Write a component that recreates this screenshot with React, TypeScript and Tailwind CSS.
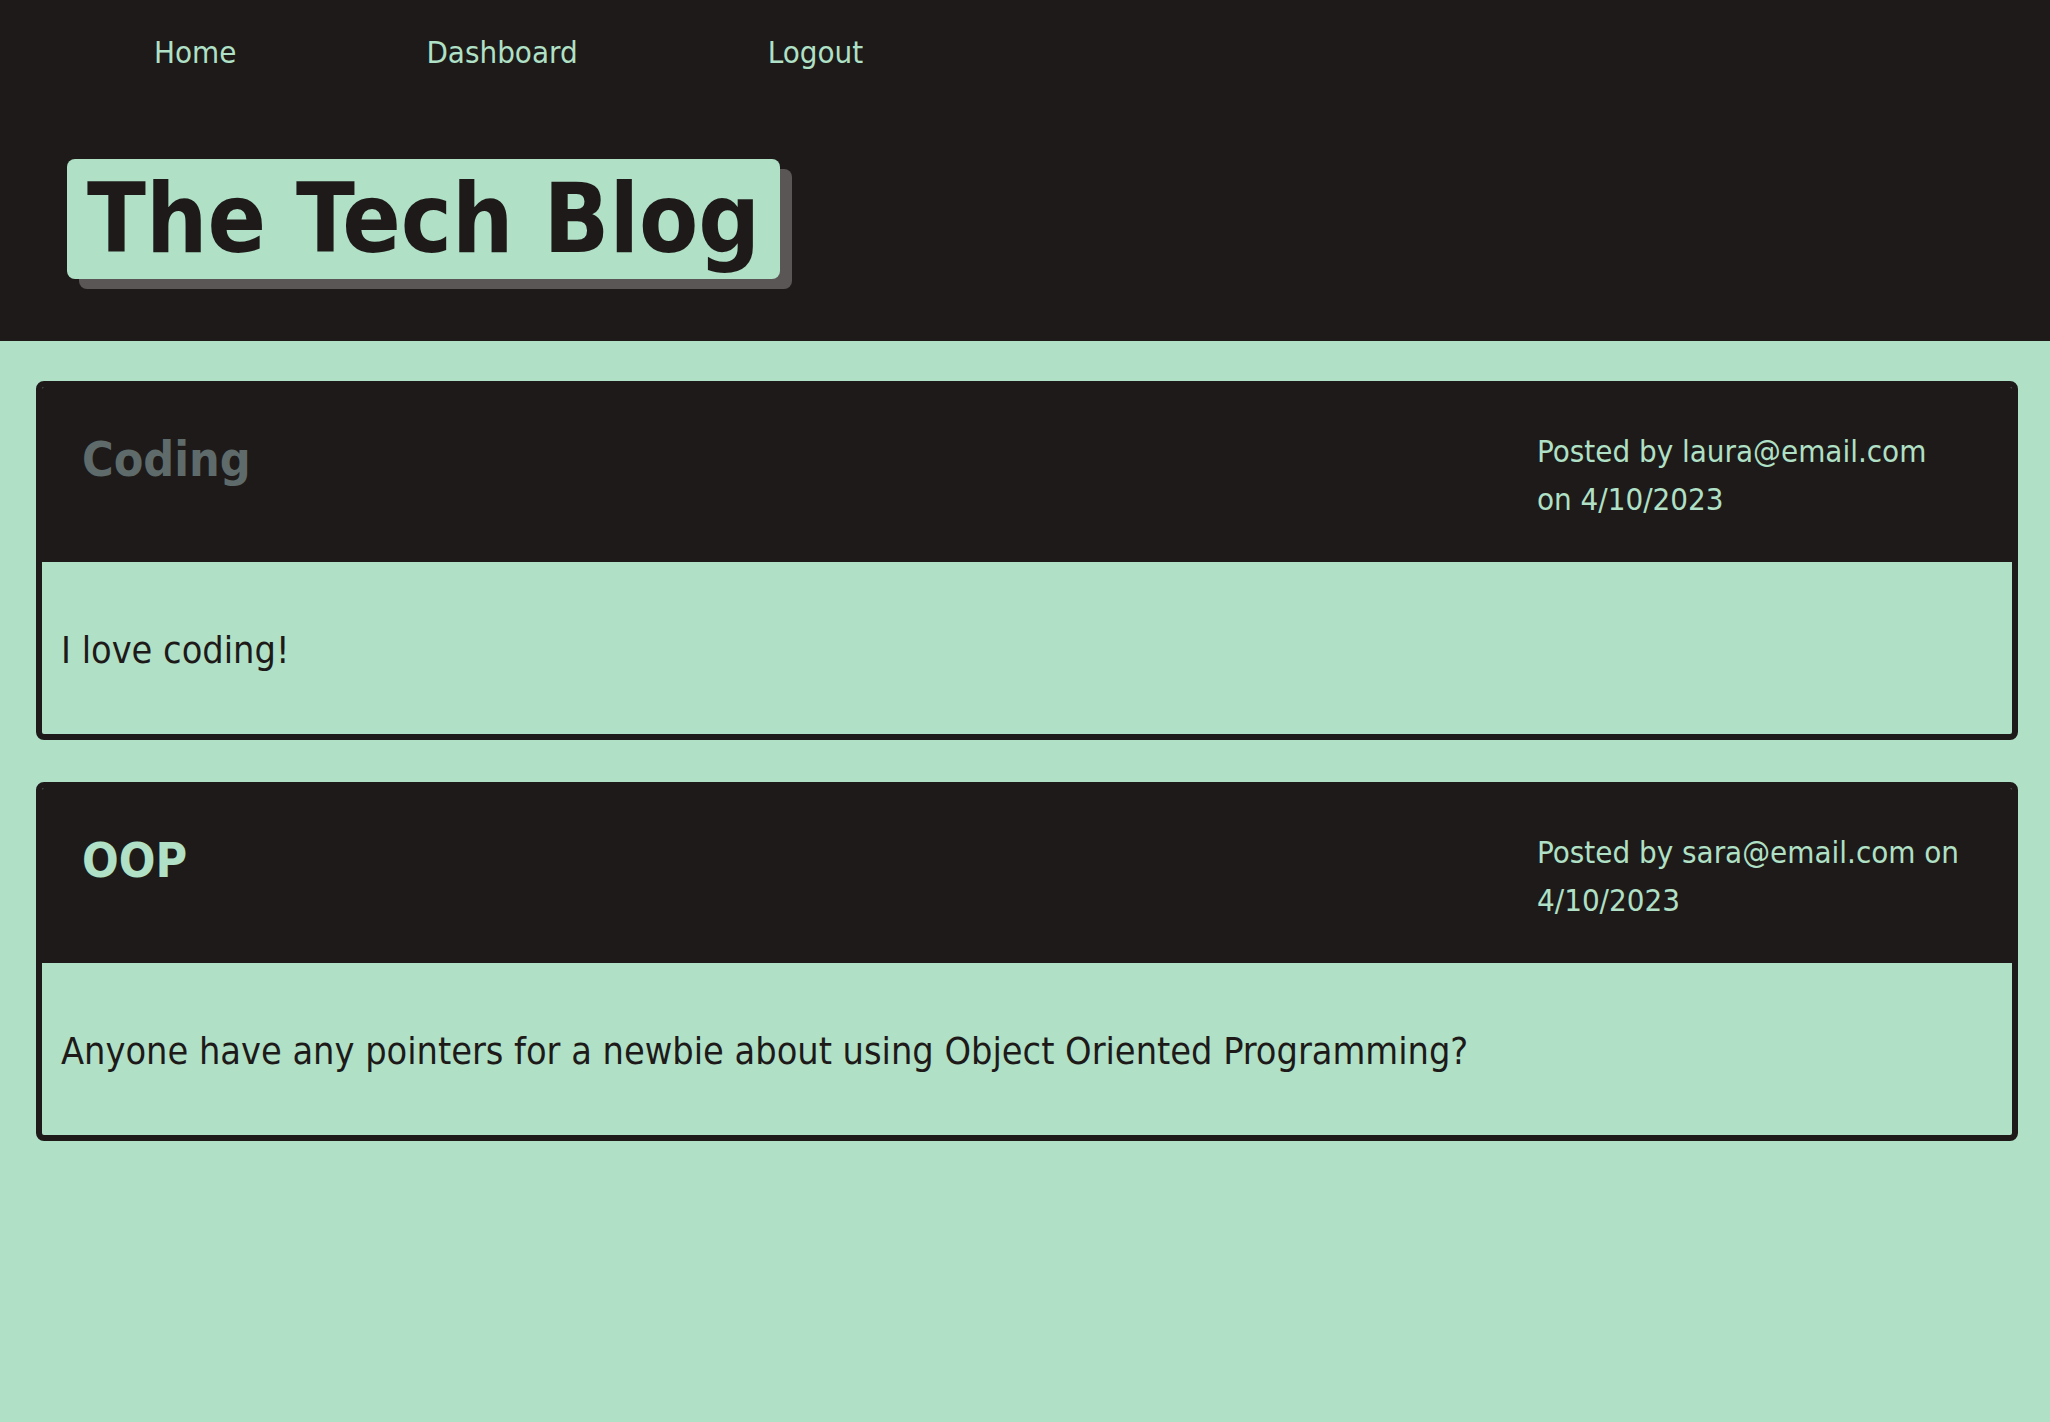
const posts = [
  {
    title: 'Coding',
    titleClass: 'text-[#5f6b6b]',
    author: 'laura@email.com',
    date: '4/10/2023',
    body: 'I love coding!',
  },
  {
    title: 'OOP',
    titleClass: 'text-[#b0e0c6]',
    author: 'sara@email.com',
    date: '4/10/2023',
    body: 'Anyone have any pointers for a newbie about using Object Oriented Programming?',
  },
];

export default function App() {
  return (
    <div className="min-h-screen bg-[#b0e0c6] font-['DejaVu_Sans_Condensed','DejaVu_Sans',sans-serif]">
      <header className="h-[341px] bg-[#1d1a19]">
        <nav className="flex gap-[190px] pl-[154px] pt-[29px] text-[31px] leading-[46px] text-[#b0e0c6]">
          <a href="#">Home</a>
          <a href="#">Dashboard</a>
          <a href="#">Logout</a>
        </nav>
        <div className="pl-[67px] pt-[84px]">
          <h1 className="inline-block rounded-lg bg-[#b0e0c6] px-[20px] py-[12px] text-[96px] font-bold leading-[96px] text-[#1d1a19] shadow-[12px_10px_0_0_#5a5655]">
            The Tech Blog
          </h1>
        </div>
      </header>

      <main className="flex flex-col gap-[42px] pl-[36px] pr-[32px] pt-[40px]">
        {posts.map((post) => (
          <article key={post.title} className="overflow-hidden rounded-lg border-[6px] border-[#1d1a19]">
            <div className="flex h-[175px] justify-between bg-[#1d1a19] pl-[40px] pr-[43px] pt-[40px]">
              <h2 className={`text-[48px] font-bold leading-[64px] ${post.titleClass}`}>{post.title}</h2>
              <p className="w-[432px] text-[31px] leading-[48px] text-[#b0e0c6]">
                Posted by {post.author} on {post.date}
              </p>
            </div>
            <div className="flex h-[172px] items-center px-[19px] pt-[5px] text-[37.5px] text-[#1d1a19]">
              <p>{post.body}</p>
            </div>
          </article>
        ))}
      </main>
    </div>
  );
}
